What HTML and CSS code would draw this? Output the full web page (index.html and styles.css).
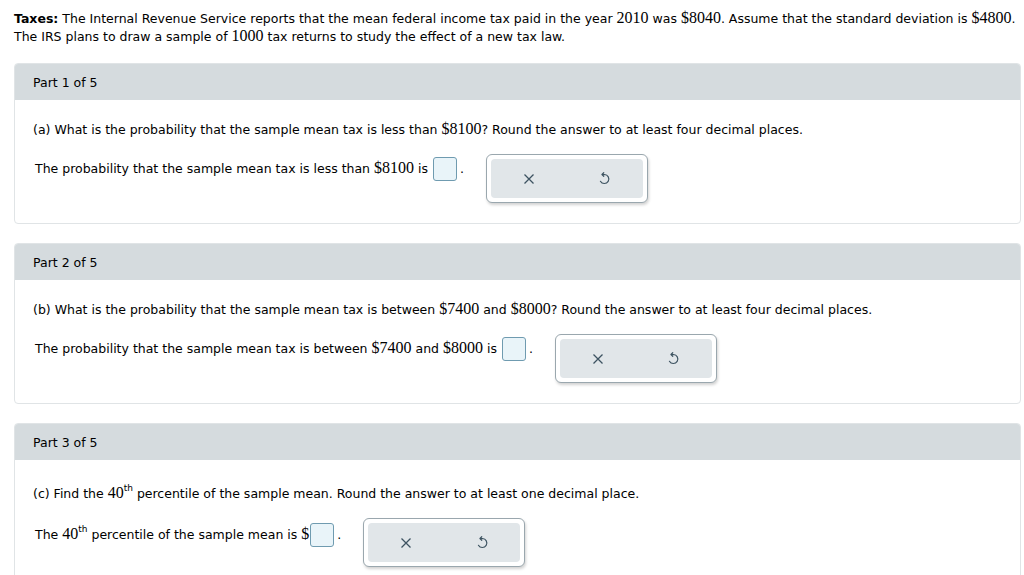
FILE: index.html
```html
<!DOCTYPE html>
<html>
<head>
<meta charset="utf-8">
<link rel="stylesheet" href="styles.css">
</head>
<body>
<div class="page">
  <p class="intro"><b>Taxes:</b> The Internal Revenue Service reports that the mean federal income tax paid in the year <span class="m">2010</span> was <span class="m">$8040</span>. Assume that the standard deviation is <span class="m">$4800</span>.<br>The IRS plans to draw a sample of <span class="m">1000</span> tax returns to study the effect of a new tax law.</p>

  <section class="card">
    <div class="card-head">Part 1 of 5</div>
    <div class="card-body">
      <p class="q">(a) What is the probability that the sample mean tax is less than <span class="m">$8100</span>? Round the answer to at least four decimal places.</p>
      <div class="answer-row">
        <p class="ans">The probability that the sample mean tax is less than <span class="m">$8100</span> is <span class="box"></span>.</p>
        <div class="widget">
          <div class="widget-inner">
            <span class="wbtn"><svg width="12" height="12" viewBox="0 0 12 12"><path d="M1.5 1.5 L10.5 10.5 M10.5 1.5 L1.5 10.5" stroke="#3d5361" stroke-width="1.3" fill="none"/></svg></span>
            <span class="wbtn"><svg width="13" height="15" viewBox="0 0 12 14"><path d="M2.2 9.6 A4.2 4.2 0 1 0 6 3.3 H3.8 M5.3 1.6 L3.6 3.3 L5.3 5" stroke="#3d5361" stroke-width="1.1" fill="none" stroke-linecap="round" stroke-linejoin="round"/></svg></span>
          </div>
        </div>
      </div>
    </div>
  </section>

  <section class="card">
    <div class="card-head">Part 2 of 5</div>
    <div class="card-body">
      <p class="q">(b) What is the probability that the sample mean tax is between <span class="m">$7400</span> and <span class="m">$8000</span>? Round the answer to at least four decimal places.</p>
      <div class="answer-row">
        <p class="ans">The probability that the sample mean tax is between <span class="m">$7400</span> and <span class="m">$8000</span> is <span class="box"></span>.</p>
        <div class="widget">
          <div class="widget-inner">
            <span class="wbtn"><svg width="12" height="12" viewBox="0 0 12 12"><path d="M1.5 1.5 L10.5 10.5 M10.5 1.5 L1.5 10.5" stroke="#3d5361" stroke-width="1.3" fill="none"/></svg></span>
            <span class="wbtn"><svg width="13" height="15" viewBox="0 0 12 14"><path d="M2.2 9.6 A4.2 4.2 0 1 0 6 3.3 H3.8 M5.3 1.6 L3.6 3.3 L5.3 5" stroke="#3d5361" stroke-width="1.1" fill="none" stroke-linecap="round" stroke-linejoin="round"/></svg></span>
          </div>
        </div>
      </div>
    </div>
  </section>

  <section class="card">
    <div class="card-head">Part 3 of 5</div>
    <div class="card-body body-sup">
      <p class="q">(c) Find the <span class="m">40</span><sup>th</sup> percentile of the sample mean. Round the answer to at least one decimal place.</p>
      <div class="answer-row">
        <p class="ans ans-sup">The <span class="m">40</span><sup>th</sup> percentile of the sample mean is <span class="m">$</span><span class="box"></span>.</p>
        <div class="widget">
          <div class="widget-inner">
            <span class="wbtn"><svg width="12" height="12" viewBox="0 0 12 12"><path d="M1.5 1.5 L10.5 10.5 M10.5 1.5 L1.5 10.5" stroke="#3d5361" stroke-width="1.3" fill="none"/></svg></span>
            <span class="wbtn"><svg width="13" height="15" viewBox="0 0 12 14"><path d="M2.2 9.6 A4.2 4.2 0 1 0 6 3.3 H3.8 M5.3 1.6 L3.6 3.3 L5.3 5" stroke="#3d5361" stroke-width="1.1" fill="none" stroke-linecap="round" stroke-linejoin="round"/></svg></span>
          </div>
        </div>
      </div>
    </div>
  </section>
</div>
</body>
</html>
```

FILE: styles.css
```css
html, body {
  margin: 0;
  padding: 0;
  background: #ffffff;
}
body {
  font-family: "DejaVu Sans", Verdana, sans-serif;
  font-size: 12.5px;
  color: #000;
  overflow: hidden;
}
.page {
  padding: 10px 3px 0 14px;
}
p {
  margin: 0;
}
.intro {
  line-height: 18px;
  white-space: nowrap;
}
.m {
  font-family: "Liberation Serif", "Times New Roman", serif;
  font-size: 16px;
  line-height: 1;
}
sup {
  font-size: 9px;
  line-height: 0;
  vertical-align: 7px;
}
.card {
  margin-top: 17px;
  border: 1px solid #e0e4e6;
  border-radius: 4px;
}
.page > .card + .card {
  margin-top: 19px;
}
.card-head {
  background: #d5dbde;
  border-radius: 3px 3px 0 0;
  height: 36px;
  line-height: 18px;
  padding: 10px 18px 0;
  box-sizing: border-box;
}
.card-body {
  padding: 21px 18px 20px;
}
.card-body.body-sup {
  padding-top: 25px;
}
.q {
  line-height: 18px;
  height: 18px;
  white-space: nowrap;
}
.answer-row {
  margin-top: 15px;
  display: flex;
  align-items: flex-start;
}
.body-sup .answer-row {
  margin-top: 15px;
}
.ans {
  padding-top: 3px;
  padding-left: 2px;
  height: 24px;
  line-height: 24px;
  white-space: nowrap;
}
.ans.ans-sup {
  padding-top: 5px;
}
.box {
  display: inline-block;
  width: 22px;
  height: 22px;
  border: 1px solid #6f9bb0;
  border-radius: 3px;
  background: #e9f4f9;
  margin: 0 3px 0 1px;
  vertical-align: middle;
  position: relative;
  top: -1px;
}
.widget {
  margin-left: 22px;
  width: 162px;
  height: 49px;
  box-sizing: border-box;
  border: 1px solid #9aa7ae;
  border-radius: 6px;
  padding: 4px;
  background: #fff;
  box-shadow: 1px 2px 3px rgba(0,0,0,0.18);
}
.widget-inner {
  display: flex;
  height: 100%;
  background: #e1e6e9;
  border-radius: 4px;
}
.wbtn {
  flex: 1;
  display: flex;
  align-items: center;
  justify-content: center;
}
```
